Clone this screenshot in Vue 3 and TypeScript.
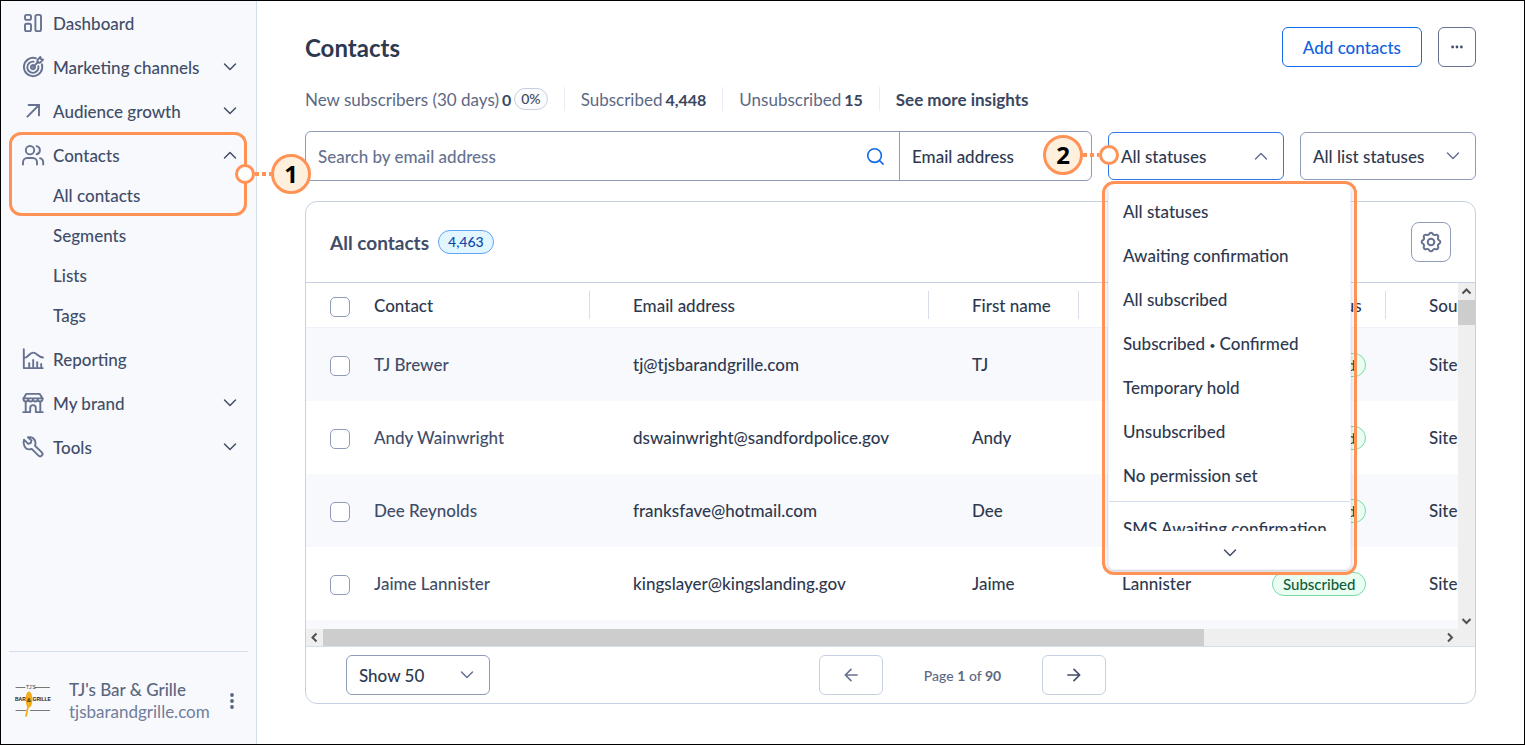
<script setup lang="ts">
import { ref } from 'vue'

interface NavItem {
  label: string
  icon: string
  expandable: boolean
  open?: boolean
}

const topNav: NavItem[] = [
  { label: 'Dashboard', icon: 'dashboard', expandable: false },
  { label: 'Marketing channels', icon: 'target', expandable: true },
  { label: 'Audience growth', icon: 'growth', expandable: true },
  { label: 'Contacts', icon: 'users', expandable: true, open: true },
]
const contactPages: string[] = ['All contacts', 'Segments', 'Lists', 'Tags']
const bottomNav: NavItem[] = [
  { label: 'Reporting', icon: 'chart', expandable: false },
  { label: 'My brand', icon: 'store', expandable: true },
  { label: 'Tools', icon: 'wrench', expandable: true },
]

const icons: Record<string, string[]> = {
  dashboard: [
    'M5.6 3.900h2.800a1.600 1.600 0 0 1 1.600 1.600v1.800a1.600 1.600 0 0 1-1.600 1.600H5.600A1.600 1.600 0 0 1 4 7.300V5.500a1.600 1.600 0 0 1 1.600-1.600z',
    'M5.600 12.800h2.800a1.600 1.600 0 0 1 1.600 1.600v4.100a1.600 1.600 0 0 1-1.600 1.600H5.600A1.600 1.600 0 0 1 4 18.500v-4.100a1.600 1.600 0 0 1 1.600-1.600z',
    'M16 3.900h2.400A1.600 1.600 0 0 1 20 5.500v13a1.600 1.600 0 0 1-1.600 1.600H16a1.600 1.600 0 0 1-1.600-1.600v-13A1.600 1.600 0 0 1 16 3.900z',
  ],
  target: [
    'M14.8 3.2A9.2 9.2 0 1 0 20.9 9.3',
    'M12.6 6.7A5.6 5.6 0 1 0 17.4 11.3',
    'M12.4 10.1A2.1 2.1 0 1 0 14 11.7',
    'M12 12l5.2-5.2',
    'M16.4 7.6V5l3-3 .6 2.1 2.1.6-3 3z',
  ],
  growth: ['M6.400 17.600L18 6', 'M7.600 6H18v10.400'],
  users: [
    'M9 3a4.2 4.2 0 1 1 0 8.4A4.2 4.2 0 0 1 9 3z',
    'M2 21.5v-2.2a4.3 4.3 0 0 1 4.3-4.3h5.4a4.3 4.3 0 0 1 4.3 4.3v2.2',
    'M15.6 3.1a4.2 4.2 0 0 1 0 8.2',
    'M22.2 21.5v-2.2a4.3 4.3 0 0 0-3.2-4.1',
  ],
  chart: [
    'M2.8 2.2v18.9h19',
    'M3 10.6h1.2c2.5 0 4.3-5 8-5s4.800 4.900 9.800 4.900',
    'M8.200 20.500v-4.300',
    'M12.200 20.500v-7.500',
    'M16.200 20.500v-5.200',
    'M20.200 20.500v-3.500',
  ],
  store: [
    'M5.200 2.900h13.600l2.700 4.500H2.500z',
    'M2.500 7.400v1a2.400 2.400 0 0 0 4.750 0 2.400 2.400 0 0 0 4.750 0 2.400 2.400 0 0 0 4.750 0 2.400 2.400 0 0 0 4.750 0v-1',
    'M4.700 10.800v10.300',
    'M19.300 10.800v10.300',
    'M2.200 21.100h7v-4.200a2.800 2.800 0 0 1 5.600 0v4.200h7',
  ],
  wrench: [
    'M3 4.600l4.200 4.200 2.500-.800.800-2.500L6.900 2.300c4-.900 7.700 1.800 7.600 5.900 0 1-.200 1.700-.500 2.500l6.800 6.700a2.300 2.300 0 0 1-3.300 3.300l-6.800-6.800c-.800.300-1.600.500-2.500.500C4.100 14.500 1.600 9.500 3 4.600z',
  ],
}

const menuOptions: string[] = [
  'All statuses',
  'Awaiting confirmation',
  'All subscribed',
  'Subscribed • Confirmed',
  'Temporary hold',
  'Unsubscribed',
  'No permission set',
]

interface Contact {
  name: string
  email: string
  first: string
  last: string
}

const contacts: Contact[] = [
  { name: 'TJ Brewer', email: 'tj@tjsbarandgrille.com', first: 'TJ', last: 'Brewer' },
  { name: 'Andy Wainwright', email: 'dswainwright@sandfordpolice.gov', first: 'Andy', last: 'Wainwright' },
  { name: 'Dee Reynolds', email: 'franksfave@hotmail.com', first: 'Dee', last: 'Reynolds' },
  { name: 'Jaime Lannister', email: 'kingslayer@kingslanding.gov', first: 'Jaime', last: 'Lannister' },
]

const search = ref('')
const status = ref('All statuses')
</script>

<template>
  <div class="shell">
    <aside class="sidebar">
      <nav class="nav" aria-label="Main">
        <button v-for="item in topNav" :key="item.label" type="button" class="nav-item" :class="{ open: item.open }">
          <svg class="nav-icon" viewBox="0 0 24 24" aria-hidden="true">
            <path v-for="d in icons[item.icon]" :key="d" :d="d" />
          </svg>
          <span class="nav-label">{{ item.label }}</span>
          <svg v-if="item.expandable" class="chevron" :class="{ up: item.open }" viewBox="0 0 16 16" aria-hidden="true">
            <path d="M2.500 5l5.500 5.500L13.500 5" />
          </svg>
        </button>
        <div class="subnav">
          <a v-for="page in contactPages" :key="page" href="#" class="sub-item">{{ page }}</a>
          <div class="callout callout-nav" aria-hidden="true">
            <span class="ring"></span><span class="dots"></span><span class="step">1</span>
          </div>
        </div>
        <button v-for="item in bottomNav" :key="item.label" type="button" class="nav-item">
          <svg class="nav-icon" viewBox="0 0 24 24" aria-hidden="true">
            <path v-for="d in icons[item.icon]" :key="d" :d="d" />
          </svg>
          <span class="nav-label">{{ item.label }}</span>
          <svg v-if="item.expandable" class="chevron" viewBox="0 0 16 16" aria-hidden="true">
            <path d="M2.500 5l5.500 5.500L13.500 5" />
          </svg>
        </button>
      </nav>
      <div class="account">
        <svg class="brand" viewBox="0 0 36 36" aria-hidden="true">
          <path d="M1 4.500h9M20 4.500h14.500M1 27.500h10M15.500 27.500h19" stroke="#777" stroke-width="1" />
          <text x="11" y="6" font-size="5" fill="#333">TJ'S</text>
          <text x="0" y="18" font-size="5" font-weight="700" fill="#222">BAR</text>
          <text x="17.500" y="18" font-size="5" font-weight="700" fill="#222">GRILLE</text>
          <path d="M13.500 22l-2.500 11" stroke="#f5ac18" stroke-width="1.700" stroke-linecap="round" />
          <ellipse cx="14" cy="16.500" rx="3.400" ry="8" fill="#f5ac18" />
          <text x="11.800" y="18.500" font-size="6" font-weight="700" fill="#4a3510">&amp;</text>
        </svg>
        <div class="account-text">
          <span class="account-name">TJ's Bar &amp; Grille</span>
          <span class="account-site">tjsbarandgrille.com</span>
        </div>
        <button type="button" class="kebab" aria-label="Account options">
          <svg viewBox="0 0 16 16" aria-hidden="true">
            <circle cx="8" cy="2" r="1.900" /><circle cx="8" cy="8" r="1.900" /><circle cx="8" cy="14" r="1.900" />
          </svg>
        </button>
      </div>
    </aside>

    <main class="main">
      <header class="page-head">
        <h1>Contacts</h1>
        <button type="button" class="add">Add contacts</button>
        <button type="button" class="more" aria-label="More actions">
          <svg viewBox="0 0 16 16" aria-hidden="true">
            <circle cx="3" cy="8" r="1.600" /><circle cx="8" cy="8" r="1.600" /><circle cx="13" cy="8" r="1.600" />
          </svg>
        </button>
      </header>

      <div class="stats">
        <span class="stat">New subscribers (30 days) <b>0</b> <span class="percent">0%</span></span>
        <span class="stat">Subscribed <b>4,448</b></span>
        <span class="stat">Unsubscribed <b>15</b></span>
        <a href="#" class="stat insights">See more insights</a>
      </div>

      <div class="filters">
        <div class="search">
          <input v-model="search" type="text" placeholder="Search by email address" aria-label="Search by email address" />
          <button type="button" class="search-btn" aria-label="Search">
            <svg viewBox="0 0 20 20" aria-hidden="true">
              <circle cx="9.500" cy="9.500" r="7.600" /><path d="M15 15l4 4" />
            </svg>
          </button>
          <select class="search-field" aria-label="Search field">
            <option>Email address</option>
          </select>
        </div>

        <div class="status-filter">
          <button type="button" class="field active" aria-haspopup="listbox" aria-expanded="true">
            <span>{{ status }}</span>
            <svg class="chevron up" viewBox="0 0 16 16" aria-hidden="true"><path d="M2.500 5l5.500 5.500L13.500 5" /></svg>
          </button>
          <div class="menu">
            <ul class="options" role="listbox" aria-label="Status">
              <li v-for="option in menuOptions" :key="option" role="option" :aria-selected="option === status" @click="status = option">
                <template v-for="(part, i) in option.split('•')" :key="part"><span v-if="i > 0" class="bullet">•</span>{{ part }}</template>
              </li>
              <li class="divided" role="option" aria-selected="false">SMS Awaiting confirmation</li>
            </ul>
            <button type="button" class="menu-more" aria-label="Scroll down">
              <svg class="chevron" viewBox="0 0 16 16" aria-hidden="true"><path d="M2.500 5l5.500 5.500L13.500 5" /></svg>
            </button>
          </div>
          <div class="callout callout-menu" aria-hidden="true"></div>
          <div class="pointer" aria-hidden="true">
            <span class="step">2</span><span class="dots"></span><span class="ring"></span>
          </div>
        </div>

        <div class="select-wrap list-status">
          <select class="field" aria-label="List status">
            <option>All list statuses</option>
          </select>
          <svg class="chevron" viewBox="0 0 16 16" aria-hidden="true"><path d="M2.500 5l5.500 5.500L13.500 5" /></svg>
        </div>
      </div>

      <section class="panel">
        <div class="panel-head">
          <h2>All contacts</h2>
          <span class="count">4,463</span>
          <button type="button" class="settings" aria-label="Table settings">
            <svg viewBox="0 0 24 24" aria-hidden="true">
              <circle cx="12" cy="12" r="3.300" />
              <path d="M10.300 3.800a1.900 1.900 0 0 1 3.400 0 2.100 2.100 0 0 0 2.800 1.100 1.950 1.950 0 0 1 2.600 2.600 2.100 2.100 0 0 0 1.100 2.800c1.500.600 1.500 2.800 0 3.400a2.100 2.100 0 0 0-1.100 2.800 1.950 1.950 0 0 1-2.600 2.600 2.100 2.100 0 0 0-2.800 1.100 1.900 1.900 0 0 1-3.400 0 2.100 2.100 0 0 0-2.800-1.100 1.950 1.950 0 0 1-2.600-2.600 2.100 2.100 0 0 0-1.100-2.800c-1.500-.600-1.500-2.800 0-3.400a2.100 2.100 0 0 0 1.100-2.800 1.950 1.950 0 0 1 2.600-2.600 2.100 2.100 0 0 0 2.800-1.100z" />
            </svg>
          </button>
        </div>

        <div class="grid">
          <div class="viewport">
            <table>
              <colgroup>
                <col class="c-check" /><col class="c-name" /><col class="c-email" /><col class="c-first" />
                <col class="c-last" /><col class="c-status" /><col />
              </colgroup>
              <thead>
                <tr>
                  <th class="check"><input type="checkbox" aria-label="Select all contacts" /></th>
                  <th class="ruled name">Contact</th>
                  <th class="ruled">Email address</th>
                  <th class="ruled">First name</th>
                  <th class="ruled">Last name</th>
                  <th class="ruled">Email status</th>
                  <th>Source</th>
                </tr>
              </thead>
              <tbody>
                <tr v-for="c in contacts" :key="c.email">
                  <td class="check"><input type="checkbox" :aria-label="'Select ' + c.name" /></td>
                  <td class="name"><a href="#">{{ c.name }}</a></td>
                  <td>{{ c.email }}</td>
                  <td>{{ c.first }}</td>
                  <td>{{ c.last }}</td>
                  <td><span class="tag">Subscribed</span></td>
                  <td>Site owner</td>
                </tr>
                <tr class="next"><td colspan="7"></td></tr>
              </tbody>
            </table>
          </div>
          <div class="vbar" aria-hidden="true">
            <svg viewBox="0 0 17 17"><path d="M4.500 10.500l4-4 4 4" /></svg>
            <div class="vthumb"></div>
            <svg class="end" viewBox="0 0 17 17"><path d="M4.500 7l4 4 4-4" /></svg>
          </div>
          <div class="hbar" aria-hidden="true">
            <svg viewBox="0 0 17 17"><path d="M10.500 4.500l-4 4 4 4" /></svg>
            <div class="htrack"><div class="hthumb"></div></div>
            <svg viewBox="0 0 17 17"><path d="M7 4.500l4 4-4 4" /></svg>
          </div>
        </div>

        <footer class="panel-foot">
          <div class="select-wrap page-size">
            <select class="field" aria-label="Rows per page">
              <option>Show 50</option>
            </select>
            <svg class="chevron" viewBox="0 0 16 16" aria-hidden="true"><path d="M2.500 5l5.500 5.500L13.500 5" /></svg>
          </div>
          <div class="pager">
            <button type="button" class="page-btn prev" aria-label="Previous page">
              <svg viewBox="0 0 16 16" aria-hidden="true"><path d="M15 8H2M8 1.500L1.500 8 8 14.500" /></svg>
            </button>
            <span class="page-text">Page <b>1</b> of <b>90</b></span>
            <button type="button" class="page-btn" aria-label="Next page">
              <svg viewBox="0 0 16 16" aria-hidden="true"><path d="M1 8h13M8 1.500L14.500 8 8 14.500" /></svg>
            </button>
          </div>
        </footer>
      </section>
    </main>
  </div>
</template>

<style>
body {
  background: #fff;
}
</style>

<style scoped>
.shell,
.shell * {
  box-sizing: border-box;
}
.shell {
  display: flex;
  min-height: 100vh;
  border: 1px solid #000;
  background: #fff;
  color: #2e3950;
  font-family: Lato, "Open Sans", sans-serif;
  font-size: 17px;
  font-weight: 500;
  line-height: 25px;
}
button,
input,
select {
  margin: 0;
  font: inherit;
  color: inherit;
}
button {
  padding: 0;
  border: 0;
  background: none;
  cursor: pointer;
}
a {
  color: inherit;
  text-decoration: none;
}
svg {
  display: block;
  flex: none;
  fill: none;
  stroke-linecap: round;
  stroke-linejoin: round;
}
select {
  appearance: none;
}

/* Sidebar */
.sidebar {
  display: flex;
  flex: none;
  flex-direction: column;
  justify-content: space-between;
  width: 256px;
  border-right: 1px solid #d5deec;
  background: #f8f9fd;
  color: #414d68;
}
.nav {
  display: flex;
  flex-direction: column;
  gap: 4px;
  padding-top: 2px;
}
.nav-item {
  display: flex;
  align-items: center;
  gap: 8px;
  height: 40px;
  padding: 0 18px 0 20px;
  text-align: left;
}
.nav-label {
  flex: 1;
}
.nav-icon {
  width: 24px;
  height: 24px;
  stroke: #66728f;
  stroke-width: 1.900;
}
.chevron {
  width: 16px;
  height: 16px;
  stroke: #414d68;
  stroke-width: 1.500;
}
.chevron.up {
  transform: rotate(180deg);
}
.subnav {
  position: relative;
  display: flex;
  flex-direction: column;
  margin-top: -4px;
}
.sub-item {
  height: 40px;
  padding-left: 52px;
  line-height: 41px;
}
.account {
  display: flex;
  align-items: center;
  gap: 18px;
  height: 93px;
  margin: 0 8px;
  padding: 5px 8px 0 6px;
  border-top: 1px solid #d5deec;
}
.brand {
  width: 36px;
  height: 36px;
  overflow: visible;
  font-family: "Liberation Sans Narrow", "Liberation Sans", sans-serif;
}
.account-text {
  display: flex;
  flex: 1;
  flex-direction: column;
  min-width: 0;
  line-height: 22px;
}
.account-name {
  color: #5a667f;
}
.account-site {
  color: #707d9b;
  font-weight: 400;
}
.kebab svg {
  width: 16px;
  height: 16px;
  fill: #5a667f;
}

/* Callouts lie over the page */
.callout {
  position: absolute;
  z-index: 3;
  border: 3px solid #ff9254;
  border-radius: 12px;
  pointer-events: none;
}
.callout-nav {
  top: -43px;
  left: 8px;
  display: flex;
  align-items: center;
  width: 238px;
  height: 84px;
  padding-left: 223px;
}
.callout-menu {
  top: 49px;
  left: -6px;
  width: 255px;
  height: 394px;
}
.pointer {
  position: absolute;
  z-index: 4;
  top: 3px;
  right: 165px;
  display: flex;
  align-items: center;
}
.ring {
  flex: none;
  width: 20px;
  height: 20px;
  border: 3px solid #ff9254;
  border-radius: 50%;
  background: #fff;
}
.dots {
  flex: none;
  width: 16px;
  height: 4px;
  background: repeating-linear-gradient(90deg, #ff9254 0 4px, transparent 4px 7px);
}
.step {
  flex: none;
  width: 40px;
  height: 40px;
  border: 3px solid #ff9254;
  border-radius: 50%;
  background: #fff0de;
  color: #000;
  font-family: "Open Sans", "Noto Sans", sans-serif;
  font-size: 24px;
  font-weight: 700;
  line-height: 34px;
  text-align: center;
}

/* Page */
.main {
  flex: 1;
  min-width: 0;
  padding: 26px 48px 40px;
}
.page-head {
  display: flex;
  align-items: center;
  gap: 16px;
  height: 40px;
}
h1 {
  flex: 1;
  margin: 0;
  font-size: 24px;
  font-weight: 700;
}
.add {
  height: 40px;
  padding: 0 20px;
  border: 1px solid #1369eb;
  border-radius: 6px;
  color: #1060e0;
}
.more {
  display: grid;
  place-items: center;
  width: 38px;
  height: 40px;
  border: 1px solid #66728f;
  border-radius: 6px;
}
.more svg {
  width: 14px;
  height: 14px;
  fill: #414d68;
}
.stats {
  display: flex;
  height: 24px;
  margin: 20px 0;
  color: #5d6984;
  font-weight: 400;
}
.stat {
  display: flex;
  align-items: center;
  gap: 3px;
  padding-right: 16px;
  margin-right: 16px;
  border-right: 1px solid #e9edf5;
}
.stat b,
.insights {
  color: #3a4660;
  font-weight: 700;
}
.stat b {
  font-size: 16px;
}
.insights {
  margin: 0;
  border: 0;
}
.percent {
  padding: 0 6px;
  border: 1px solid #c7d0e2;
  border-radius: 11px;
  background: #fafbfd;
  color: #3a4660;
  font-size: 14px;
  font-weight: 500;
  line-height: 20px;
}
.filters {
  display: flex;
  align-items: center;
  gap: 16px;
}
.search {
  display: flex;
  flex: 1;
  height: 50px;
  border: 1px solid #8e9bb9;
  border-radius: 6px;
}
.search input {
  flex: 1;
  min-width: 0;
  padding: 0 12px;
  border: 0;
  background: none;
  outline: none;
}
.search input::placeholder {
  color: #66728f;
  opacity: 1;
}
.search-btn {
  padding: 0 15px;
}
.search-btn svg {
  width: 18px;
  height: 18px;
  stroke: #1369eb;
  stroke-width: 1.800;
}
.search-field {
  width: 192px;
  padding: 0 12px;
  border: 0;
  border-left: 1px solid #8e9bb9;
  background: none;
}
.status-filter {
  position: relative;
  width: 176px;
}
.field {
  display: flex;
  align-items: center;
  justify-content: space-between;
  width: 100%;
  height: 48px;
  padding: 0 14px 0 12px;
  border: 1px solid #8e9bb9;
  border-radius: 6px;
  background: #fff;
}
.field.active {
  border-color: #2f77e8;
}
.field .chevron,
.select-wrap .chevron {
  stroke: #66728f;
}
.select-wrap {
  display: grid;
  align-items: center;
}
.select-wrap > * {
  grid-area: 1 / 1;
}
.select-wrap .chevron {
  justify-self: end;
  margin-right: 15px;
  pointer-events: none;
}
.list-status {
  width: 176px;
}
.menu {
  position: absolute;
  z-index: 2;
  top: 51px;
  left: 0;
  width: 243px;
  border: 1px solid #f0f3f9;
  border-radius: 6px;
  background: #fff;
  box-shadow: 0 2px 4px rgba(40, 50, 70, 0.24);
}
.options {
  height: 347px;
  margin: 0;
  padding: 5px 0 0;
  overflow: hidden;
  list-style: none;
}
.options li {
  height: 44px;
  padding-left: 14px;
  line-height: 45px;
  white-space: nowrap;
}
.bullet {
  font-size: 10px;
  line-height: 1;
  vertical-align: 1px;
}
.options .divided {
  margin-top: 4px;
  border-top: 1px solid #d5deec;
  line-height: 53px;
}
.menu-more {
  display: grid;
  place-items: center;
  width: 100%;
  height: 38px;
  padding-top: 6px;
}

/* Contacts panel */
.panel {
  margin-top: 20px;
  overflow: hidden;
  border: 1px solid #c7d0e2;
  border-radius: 12px;
}
.panel-head {
  display: flex;
  align-items: center;
  gap: 9px;
  height: 81px;
  padding: 0 24px;
  border-bottom: 1px solid #c7d0e2;
}
h2 {
  margin: 0;
  color: #414d68;
  font-size: 19px;
  font-weight: 700;
}
.count {
  padding: 0 9px;
  border: 1px solid #62a3f5;
  border-radius: 12px;
  background: #e2f6ff;
  color: #0b48a8;
  font-size: 14px;
  line-height: 22px;
}
.settings {
  display: grid;
  place-items: center;
  width: 40px;
  height: 40px;
  margin-left: auto;
  border: 1px solid #8e9bb9;
  border-radius: 8px;
}
.settings svg {
  width: 24px;
  height: 24px;
  stroke: #66728f;
  stroke-width: 2;
}
.grid {
  display: grid;
  grid-template-columns: minmax(0, 1fr) 17px;
  grid-template-rows: 346px 17px;
  border-bottom: 1px solid #d5deec;
}
.viewport {
  overflow: hidden;
}
table {
  width: 1463px;
  border-collapse: separate;
  border-spacing: 0;
  table-layout: fixed;
}
.c-check {
  width: 68px;
}
.c-name {
  width: 216px;
}
.c-email {
  width: 339px;
}
.c-first,
.c-last {
  width: 150px;
}
.c-status {
  width: 157px;
}
th,
td {
  padding: 0 0 0 43px;
  font-weight: 500;
  text-align: left;
  white-space: nowrap;
}
th {
  height: 45px;
  border-bottom: 1px solid #eef1f7;
}
td {
  height: 73px;
}
.check {
  padding-left: 24px;
}
.name {
  padding-left: 0;
}
td.name {
  color: #414d68;
}
.ruled {
  background: linear-gradient(#d8deea, #d8deea) right center / 1px 28px no-repeat;
}
tbody tr:nth-child(odd) {
  background: #f8f9fd;
}
.check input {
  display: block;
  appearance: none;
  width: 20px;
  height: 20px;
  margin-top: 3px;
  border: 1px solid #8e9bb9;
  border-radius: 5px;
  background: #fff;
}
.tag {
  display: inline-block;
  padding: 0 10px;
  border: 1px solid #7adba6;
  border-radius: 12px;
  background: #e9fdf1;
  color: #0d5c38;
  font-size: 15px;
  line-height: 22px;
}
.vbar,
.hbar {
  display: flex;
  background: #efefef;
}
.vbar {
  flex-direction: column;
}
.vbar svg,
.hbar svg {
  width: 17px;
  height: 17px;
  stroke: #505050;
  stroke-width: 2;
  stroke-linecap: butt;
  stroke-linejoin: miter;
}
.vthumb {
  height: 25px;
  background: #cdcdcd;
}
.vbar .end {
  margin-top: auto;
}
.hbar {
  grid-column: 1 / 3;
  padding-right: 17px;
}
.htrack {
  flex: 1;
}
.hthumb {
  width: 78.8%;
  height: 17px;
  background: #cdcdcd;
}
.panel-foot {
  display: flex;
  align-items: center;
  gap: 329px;
  height: 56px;
  padding-left: 40px;
}
.page-size {
  width: 144px;
}
.page-size .field {
  height: 40px;
}
.pager {
  display: flex;
  align-items: center;
}
.page-btn {
  display: grid;
  place-items: center;
  width: 64px;
  height: 40px;
  border: 1px solid #c7d0e2;
  border-radius: 6px;
}
.page-btn svg {
  width: 14px;
  height: 14px;
  stroke: #414d68;
  stroke-width: 1.900;
}
.page-btn.prev svg {
  stroke: #66728f;
}
.page-text {
  width: 159px;
  color: #5d6984;
  font-size: 14px;
  text-align: center;
}
</style>
